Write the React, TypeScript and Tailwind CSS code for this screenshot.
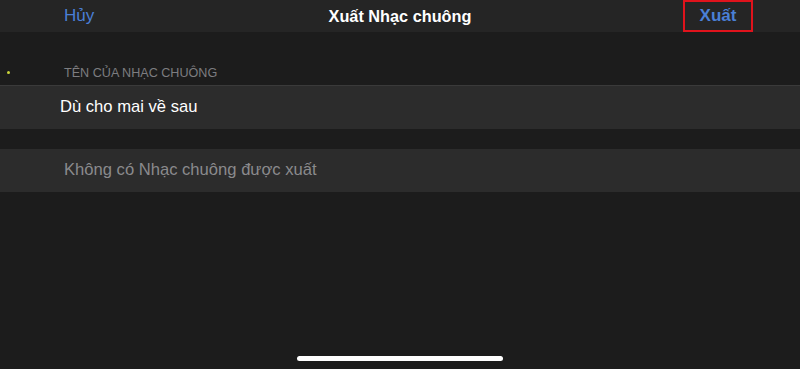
export default function App() {
  return (
    <div
      className="relative flex h-[369px] w-[800px] flex-col overflow-hidden bg-[#1c1c1c]"
      style={{ fontFamily: '"Liberation Sans", Arial, sans-serif' }}
    >
      {/* nav bar */}
      <div className="relative flex h-[32px] items-center bg-[#252525] px-[64px]">
        <span className="text-[17px] text-[#4a7fd6]">Hủy</span>
        <span className="absolute left-1/2 -translate-x-1/2 text-[16.3px] font-semibold text-white">
          Xuất Nhạc chuông
        </span>
        <div className="ml-auto mr-[-17px] flex h-[32px] w-[70px] items-center justify-center border-2 border-[#e0131c]">
          <span className="text-[17px] font-semibold text-[#4a7fd6]">Xuất</span>
        </div>
      </div>

      {/* section header */}
      <div className="relative mt-[30px] flex h-[23px] items-center px-[64px]">
        <span className="absolute left-[7px] top-[9px] h-[3px] w-[3px] rounded-full bg-[#c9d43a]" />
        <span className="text-[12.6px] text-[#7d7d80]">TÊN CỦA NHẠC CHUÔNG</span>
      </div>

      {/* name row */}
      <div className="flex h-[44px] items-center border-t border-[#3a3a3a] bg-[#2c2c2c] px-[60px]">
        <span className="text-[16.6px] text-white">Dù cho mai về sau</span>
      </div>

      {/* empty row */}
      <div className="mt-[20px] flex h-[43px] items-center bg-[#2c2c2c] px-[64px]">
        <span className="text-[16.6px] text-[#8a8a8c]">Không có Nhạc chuông được xuất</span>
      </div>

      {/* home indicator */}
      <div className="mt-auto mb-[8px] flex justify-center">
        <div className="h-[5px] w-[206px] rounded-full bg-white" />
      </div>
    </div>
  );
}
